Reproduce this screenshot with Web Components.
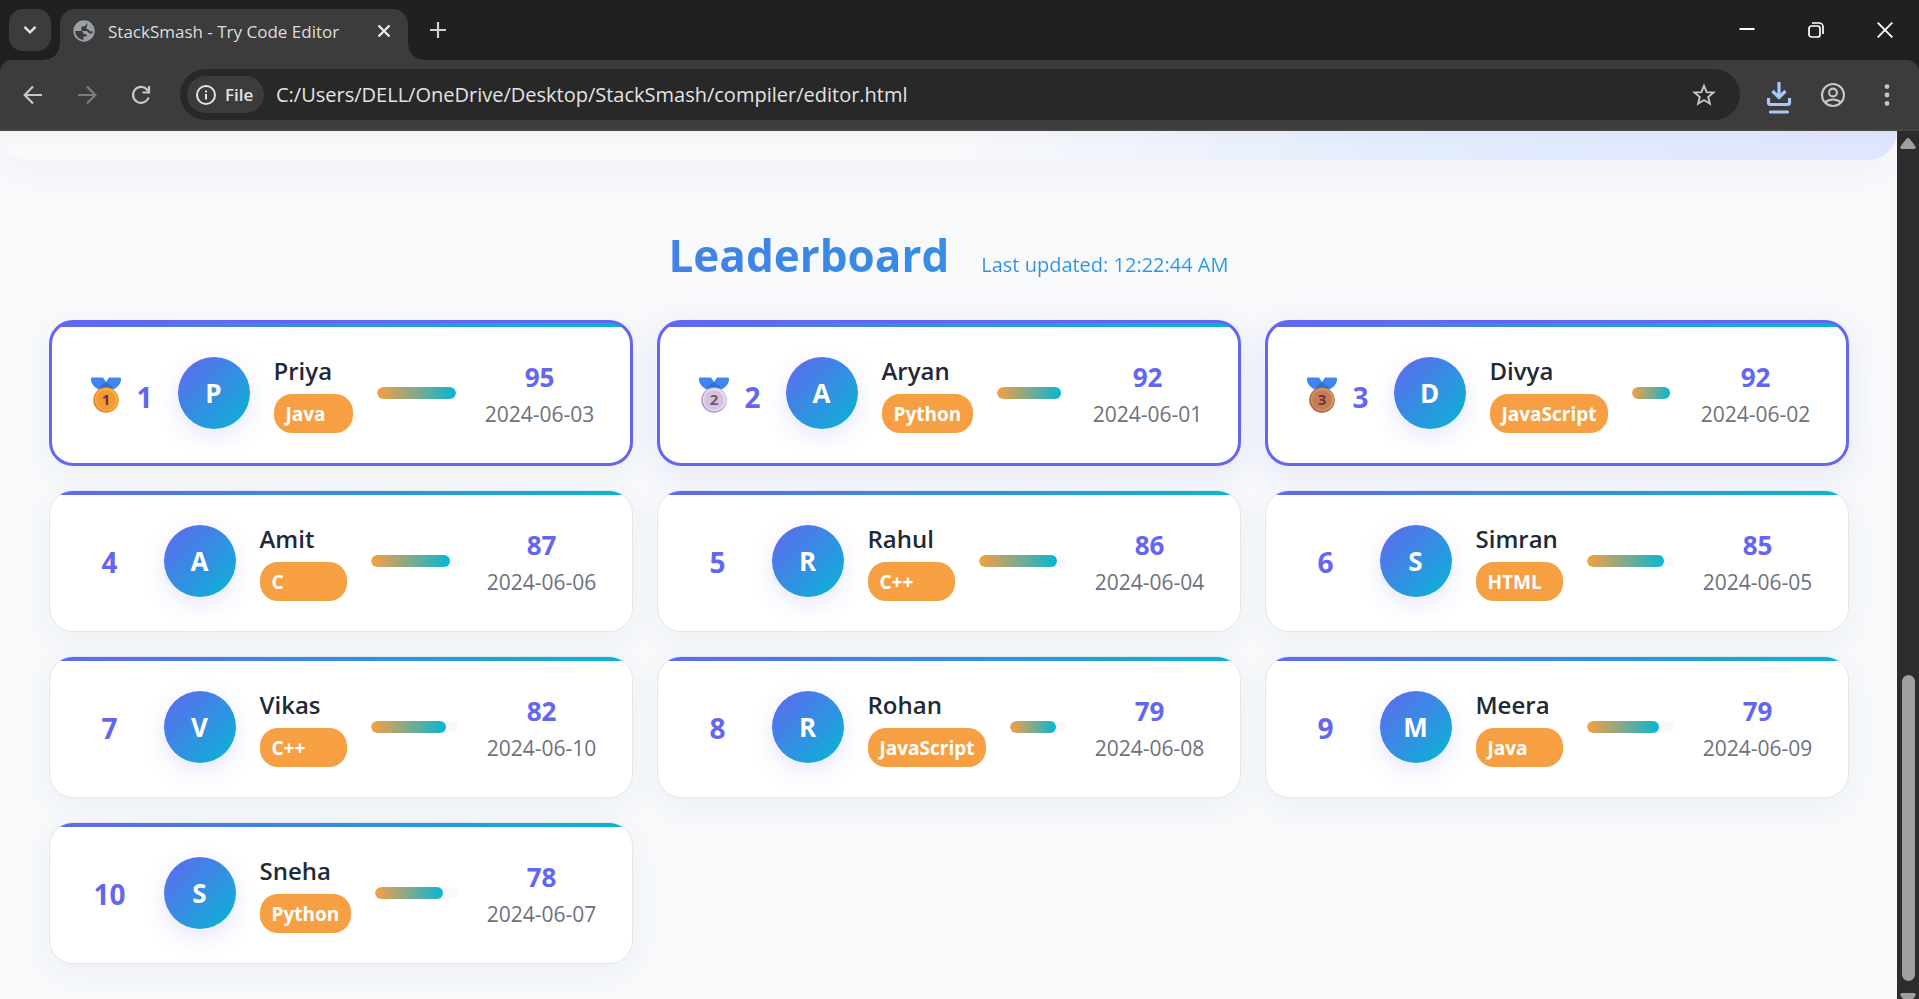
<!DOCTYPE html>
<html lang="en">
<head>
<meta charset="utf-8">
<title>StackSmash - Try Code Editor</title>
<style>
  html, body { height: 100%; margin: 0; }
  body { font-family: "Open Sans", "Noto Sans", sans-serif; overflow: hidden; }
</style>
</head>
<body>
<browser-window>
  <tab-strip slot="chrome">StackSmash - Try Code Editor</tab-strip>
  <tool-bar slot="chrome" url="C:/Users/DELL/OneDrive/Desktop/StackSmash/compiler/editor.html"></tool-bar>
  <hero-tail></hero-tail>
  <leader-board updated="Last updated: 12:22:44 AM">
    <player-card rank="1" name="Priya" lang="Java" score="95" date="2024-06-03"></player-card>
    <player-card lifted rank="2" name="Aryan" lang="Python" score="92" date="2024-06-01"></player-card>
    <player-card lifted rank="3" name="Divya" lang="JavaScript" score="92" date="2024-06-02"></player-card>
    <player-card rank="4" name="Amit" lang="C" score="87" date="2024-06-06"></player-card>
    <player-card rank="5" name="Rahul" lang="C++" score="86" date="2024-06-04"></player-card>
    <player-card rank="6" name="Simran" lang="HTML" score="85" date="2024-06-05"></player-card>
    <player-card rank="7" name="Vikas" lang="C++" score="82" date="2024-06-10"></player-card>
    <player-card rank="8" name="Rohan" lang="JavaScript" score="79" date="2024-06-08"></player-card>
    <player-card rank="9" name="Meera" lang="Java" score="79" date="2024-06-09"></player-card>
    <player-card rank="10" name="Sneha" lang="Python" score="78" date="2024-06-07"></player-card>
  </leader-board>
  <scroll-bar slot="scroll"></scroll-bar>
</browser-window>

<script>
const define = (tag, render) => customElements.define(tag, class extends HTMLElement {
  constructor() { super(); this.attachShadow({ mode: "open" }); }
  connectedCallback() { this.shadowRoot.innerHTML = render(this); }
});

define("browser-window", () => `
<style>
  :host { display: flex; flex-direction: column; height: 100vh; background: #3c3c3c; }
  .view { flex: 1; min-height: 0; display: flex; }
  main { flex: 1; min-width: 0; overflow: hidden; background: #f7f9fb; }
</style>
<slot name="chrome"></slot>
<div class="view"><main><slot></slot></main><slot name="scroll"></slot></div>`);

define("tab-strip", () => `
<style>
  :host { display: flex; height: 60px; background: #1f2120; color: #dedede; }
  button { all: unset; display: grid; place-items: center; cursor: pointer; }
  .search { width: 42px; height: 42px; margin: 9px 9px 0; border-radius: 14px; background: #3c3c3c; }
  .tab { position: relative; box-sizing: border-box; display: flex; align-items: center; width: 348px; height: 51px; margin-top: 9px; padding: 0 14px 8px 13px; border-radius: 15px 15px 0 0; background: #3c3c3c; }
  .tab::before, .tab::after { content: ""; position: absolute; bottom: 0; width: 15px; height: 15px; }
  .tab::before { right: 100%; background: radial-gradient(circle at 0 0, transparent 14px, #3c3c3c 15px); }
  .tab::after { left: 100%; background: radial-gradient(circle at 100% 0, transparent 14px, #3c3c3c 15px); }
  .title { flex: 1; margin-left: 13px; padding-top: 2px; font-size: 17px; line-height: 24px; white-space: nowrap; }
  .close { width: 20px; height: 20px; }
  .new { width: 30px; height: 30px; margin: 15px 0 0 15px; }
  .win { display: flex; margin-left: auto; }
  .win button { width: 69px; height: 60px; }
  svg { display: block; fill: none; }
</style>
<button class="search" aria-label="Search tabs"><svg width="14" height="10" viewBox="0 0 14 10" stroke="#e3e3e3" stroke-width="2.4"><path d="M1.5 1.8 7 7.3l5.5-5.5"/></svg></button>
<div class="tab">
  <svg width="22" height="22" viewBox="0 0 22 22"><circle cx="11" cy="11" r="9.8" stroke="#9aa0a6" stroke-width="1.8"/><path fill="#9aa0a6" d="M11 1.500C5 1.500 1.500 6 1.500 11h6.500c2 0 2.500 1.500 2.500 3h3v2.500h-3V20c5 .5 8.500-3 9.500-7-1 .5-2 .8-3 .5-2-.5-2-2.500-4-2.500H8.500V6.500H11c1.500 0 1-2 3-2.300V2z"/><path fill="#9aa0a6" d="M14 2c4 1 6.500 4.500 6.500 9l-3 .5c-1 0-1.500-2.500-4-2.500V6.500c1.500-1 1-3 .5-4.500z"/></svg>
  <span class="title"><slot></slot></span>
  <button class="close" aria-label="Close tab"><svg width="14" height="14" viewBox="0 0 14 14" stroke="#e8e8e8" stroke-width="2.4"><path d="m1.500 1.500 11 11m0-11-11 11"/></svg></button>
</div>
<button class="new" aria-label="New tab"><svg width="16" height="16" viewBox="0 0 16 16" stroke="#d0d0d0" stroke-width="2.200"><path d="M8 0v16M0 8h16"/></svg></button>
<div class="win">
  <button aria-label="Minimise"><svg width="16" height="16" viewBox="0 0 16 16" stroke="#fff" stroke-width="2"><path d="M.5 7h15"/></svg></button>
  <button aria-label="Restore"><svg width="16" height="16" viewBox="0 0 16 16" stroke="#fff" stroke-width="1.700"><rect x="1" y="4" width="11" height="11" rx="2.500"/><path d="M4 1h7a4 4 0 0 1 4 4v7"/></svg></button>
  <button aria-label="Close"><svg width="16" height="16" viewBox="0 0 16 16" stroke="#fff" stroke-width="1.900"><path d="m.7.7 14.600 14.600m0-14.600L.7 15.300"/></svg></button>
</div>`);

define("tool-bar", host => `
<style>
  :host { display: block; background: #1f2120; }
  .bar { box-sizing: border-box; display: flex; align-items: center; gap: 6px; height: 71px; padding: 0 8px 0 9px; border-bottom: 2px solid #454545; border-radius: 12px 12px 0 0; background: #3c3c3c; }
  button { all: unset; display: grid; place-items: center; width: 48px; height: 48px; cursor: pointer; }
  .omni { box-sizing: border-box; flex: 1; display: flex; align-items: center; height: 51px; margin: 0 9px; padding: 0 12px 0 7px; border-radius: 26px; background: #282828; }
  .chip { display: flex; justify-content: flex-start; gap: 8px; box-sizing: border-box; width: 77px; height: 37px; padding-left: 8px; border-radius: 19px; background: #3c3c3c; color: #e3e3e3; font-size: 17px; font-weight: 600; }
  input { all: unset; flex: 1; min-width: 0; margin-left: 12px; color: #e3e3e3; font-size: 20px; line-height: 30px; }
  svg { display: block; fill: none; }
</style>
<nav class="bar" aria-label="Browser toolbar">
  <button aria-label="Back"><svg width="20" height="20" viewBox="0 0 20 20" stroke="#c7c7c7" stroke-width="2.200"><path d="M19 10H2M10 1.500 1.700 10l8.300 8.500"/></svg></button>
  <button aria-label="Forward"><svg width="20" height="20" viewBox="0 0 20 20" stroke="#7c7c7c" stroke-width="2.200"><path d="M1 10h17M10 1.500l8.300 8.500-8.300 8.500"/></svg></button>
  <button aria-label="Reload"><svg width="20" height="20" viewBox="0 0 20 20" stroke="#c7c7c7" stroke-width="2.200"><path d="M17.600 12.500A8 8 0 1 1 16 4.500l2 2.500"/><path d="M18 1v6.500h-6.500"/></svg></button>
  <div class="omni">
    <button class="chip"><svg width="22" height="22" viewBox="0 0 22 22" stroke="#e3e3e3" stroke-width="2"><circle cx="11" cy="11" r="9"/><path d="M11 10v5.500M11 6.500v2"/></svg>File</button>
    <input id="url" aria-label="Address" value="${host.getAttribute("url")}">
    <button aria-label="Bookmark this page"><svg width="24" height="24" viewBox="0 0 24 24" stroke="#c7c7c7" stroke-width="1.900"><path d="m12 2.800 2.600 6.300 6.900.5-5.300 4.400 1.700 6.700-5.900-3.700-5.900 3.700 1.700-6.700-5.300-4.400 6.900-.5z"/></svg></button>
  </div>
  <button aria-label="Downloads"><svg width="26" height="42" viewBox="0 -8 26 42" stroke="#a8c7fa" stroke-width="3.200"><path d="M13 0v15M6.500 9 13 15.500 19.500 9"/><path d="M2.500 16v4.500q0 2 2 2h17q2 0 2-2V16"/><path d="M4.500 30h17" stroke-linecap="round"/></svg></button>
  <button aria-label="Profile"><svg width="26" height="26" viewBox="0 0 26 26" stroke="#c7c7c7" stroke-width="2.100"><circle cx="13" cy="13" r="11"/><circle cx="13" cy="10.500" r="3.900"/><path d="M5 20.500c4.500-4 11.500-4 16 0"/></svg></button>
  <button aria-label="Menu"><svg width="6" height="24" viewBox="0 0 6 24"><g fill="#c7c7c7"><circle cx="3" cy="3.600" r="2.400"/><circle cx="3" cy="12" r="2.400"/><circle cx="3" cy="20.400" r="2.400"/></g></svg></button>
</nav>`);

define("hero-tail", () => `
<style>
  :host { display: block; height: 29px; border-radius: 0 0 32px 32px; background: linear-gradient(to bottom, rgb(0 0 0 / 2%), transparent 16px), linear-gradient(100deg, #f8f9fb 50%, #e3ecfd 75%, #e0e5ff 100%); box-shadow: 0 8px 32px rgb(99 102 241 / 6%); }
</style>`);

define("leader-board", host => `
<style>
  :host { display: block; max-width: 1800px; margin: 61px auto 0; padding: 0 24px; }
  h2 { display: flex; justify-content: center; align-items: baseline; gap: 32px; margin: 0 0 31px; font-size: 44px; line-height: 68px; font-weight: 700; color: transparent; background: linear-gradient(90deg, #6366f1, #06b6d4); -webkit-background-clip: text; background-clip: text; }
  small { font-size: 20px; line-height: 28px; font-weight: 400; }
  .grid { display: grid; grid-template-columns: repeat(3, minmax(0, 1fr)); gap: 24px; }
</style>
<section>
  <h2><span>Leaderboard</span><small>${host.getAttribute("updated")}</small></h2>
  <div class="grid"><slot></slot></div>
</section>`);

const medals = {
  1: { rim: "#e8862c", face: "#fbb03b", inner: "#f39a35", ink: "#6b3347" },
  2: { rim: "#b99fd0", face: "#e6dced", inner: "#d3c3df", ink: "#6a5b6e" },
  3: { rim: "#b5624a", face: "#d79262", inner: "#c47c50", ink: "#6b3347" },
};
define("place-medal", host => {
  const m = medals[host.getAttribute("place")];
  return `
<style>
  :host { display: block; }
  svg { display: block; }
  text { font: 700 15px "Open Sans", sans-serif; }
</style>
<svg width="32" height="36" viewBox="0 0 32 36" role="img" aria-label="Medal">
  <path fill="#4285ee" d="M2.500.5H12q1.200 0 1.800 1L16 5l2.200-3.500q.6-1 1.800-1h9.500q2 0 1.700 2-.6 5.500-6.700 9.500h-17Q1.400 8 .8 2.500q-.3-2 1.700-2z"/>
  <path fill="#2f6fd8" d="M10 9.500 16 5l6 4.500v3H10z"/>
  <circle cx="16" cy="23" r="12.800" fill="${m.rim}"/>
  <circle cx="16.500" cy="22.500" r="11.600" fill="${m.face}"/>
  <circle cx="16" cy="23" r="9.800" fill="${m.inner}"/>
  <text x="16" y="28" text-anchor="middle" fill="${m.ink}">${host.getAttribute("place")}</text>
</svg>`;
});

const topScore = 95;
define("player-card", host => {
  const get = key => host.getAttribute(key);
  const top = get("rank") in medals;
  return `
<style>
  :host { display: block; }
  article { display: flex; align-items: center; gap: 24px; padding: 30px; border: 1px solid #e5e7eb; border-radius: 24px; background: linear-gradient(90deg, #6366f1, #06b6d4) top / 100% 4px no-repeat #fff; box-shadow: 0 8px 32px rgb(60 72 120 / 5%); }
  article.top { border: 3px solid #6366f1; }
  :host([lifted]) article { box-shadow: 0 8px 32px rgb(99 102 241 / 12%); }
  .rank { box-sizing: border-box; display: flex; justify-content: center; align-items: center; gap: 14px; min-width: 60px; padding-top: 2px; font-size: 28px; line-height: 40px; font-weight: 700; color: #6366f1; }
  .top .rank { min-width: 72px; padding: 4px 0 0 8px; }
  .top .rank span { padding-top: 4px; }
  .avatar { flex: none; display: grid; place-items: center; width: 72px; height: 72px; border-radius: 50%; background: linear-gradient(135deg, #6366f1, #06b6d4); box-shadow: 0 8px 24px rgb(99 102 241 / 16%); color: #fff; font-size: 26px; font-weight: 700; }
  .info { flex: 1 1 0; display: grid; gap: 5px; }
  h3 { margin: 0; font-size: 24px; line-height: 36px; font-weight: 600; color: #1f2937; white-space: nowrap; }
  .lang { padding: 5px 12px 3px; border-radius: 18px; background: #f79f43; color: #fff; font-size: 19px; line-height: 31px; font-weight: 700; }
  .track { flex: 1 1 0; min-width: 0; height: 12px; border-radius: 6px; background: #f7f9fb; overflow: hidden; }
  .fill { height: 100%; border-radius: 6px; background: linear-gradient(90deg, #f79f43, #06b6d4); }
  .stats { flex: none; width: 120px; padding-top: 3px; text-align: center; white-space: nowrap; }
  .score { font-size: 26px; line-height: 38px; font-weight: 700; color: #6366f1; }
  time { display: block; font-size: 21px; line-height: 36px; color: #6b7280; }
</style>
<article class="${top ? "top" : ""}">
  <div class="rank">${top ? `<place-medal place="${get("rank")}"></place-medal>` : ""}<span>${get("rank")}</span></div>
  <div class="avatar">${get("name")[0]}</div>
  <div class="info"><h3>${get("name")}</h3><div class="lang">${get("lang")}</div></div>
  <div class="track"><div class="fill" style="width: calc(100% * ${get("score")} / ${topScore})"></div></div>
  <div class="stats"><div class="score">${get("score")}</div><time>${get("date")}</time></div>
</article>`;
});

define("scroll-bar", () => `
<style>
  :host { flex: none; box-sizing: border-box; display: flex; flex-direction: column; align-items: center; width: 22px; padding-top: 7px; background: #2c2c2c; }
  svg { display: block; flex: none; }
  .before { flex: 526; }
  .thumb { flex: 306; width: 13px; border-radius: 7px; background: #9f9f9f; }
  .after { flex: 12; }
  .down { height: 6px; overflow: hidden; }
</style>
<svg width="16" height="11" viewBox="0 0 16 11"><path fill="#9f9f9f" d="M6.200 1q1.800-2 3.600 0l5.500 7q1.200 3-1.500 3H2.200Q-.500 11 .7 8z"/></svg>
<div class="before"></div><div class="thumb"></div><div class="after"></div>
<div class="down"><svg width="16" height="11" viewBox="0 0 16 11"><path fill="#9f9f9f" d="M6.200 10q1.800 2 3.600 0l5.500-7q1.200-3-1.500-3H2.200Q-.500 0 .7 3z"/></svg></div>`);
</script>
</body>
</html>
